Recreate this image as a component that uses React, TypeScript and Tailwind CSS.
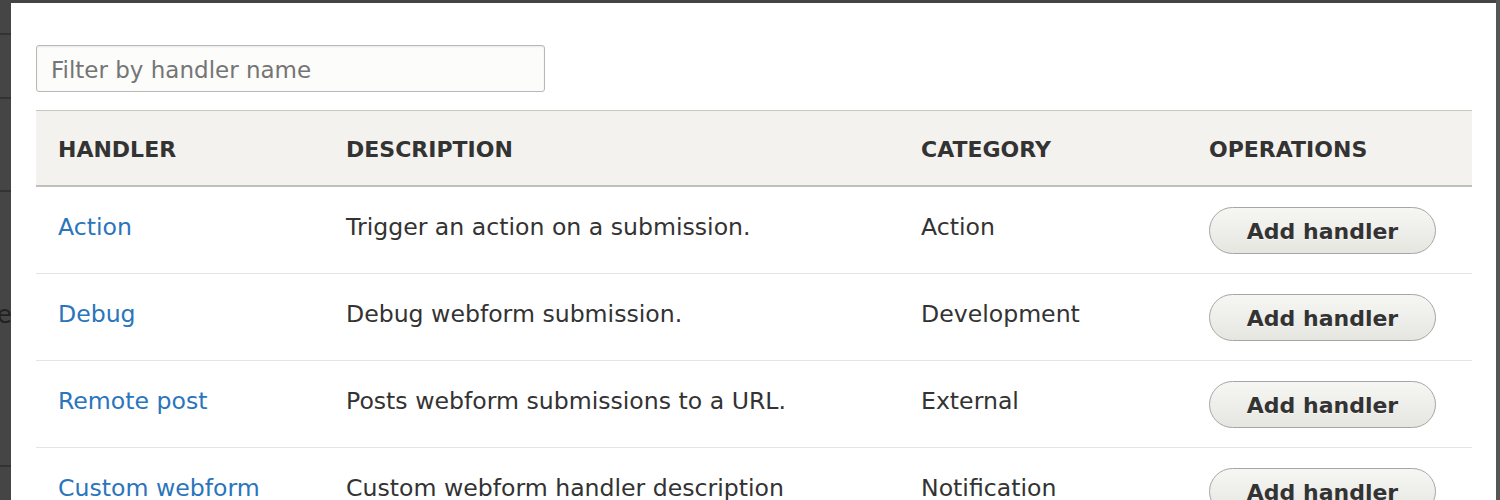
import React from "react";

const rows = [
  { name: "Action", desc: "Trigger an action on a submission.", cat: "Action" },
  { name: "Debug", desc: "Debug webform submission.", cat: "Development" },
  { name: "Remote post", desc: "Posts webform submissions to a URL.", cat: "External" },
  { name: "Custom webform", desc: "Custom webform handler description", cat: "Notification" },
];

function AddButton() {
  return (
    <button className="w-[227px] h-[47px] rounded-full border border-[#a6a6a6] bg-gradient-to-b from-[#f6f6f3] to-[#e6e6e1] text-[22px] font-bold text-[#333] leading-none pt-[2px] [text-shadow:0_1px_rgba(255,255,255,0.6)]">
      Add handler
    </button>
  );
}

export default function App() {
  return (
    <div
      className="w-[1500px] h-[500px] bg-[#444] flex overflow-hidden"
      style={{ fontFamily: '"DejaVu Sans", "Liberation Sans", sans-serif' }}
    >
      {/* left overlay strip */}
      <div className="w-[11px] shrink-0 flex flex-col bg-[#454545] relative">
        <div className="h-[33px]" />
        <div className="h-[2px] bg-[#333]" />
        <div className="h-[62px]" />
        <div className="h-[2px] bg-[#333]" />
        <div className="h-[91px]" />
        <div className="h-[2px] bg-[#333]" />
        <div className="h-[111px]" />
        <div className="text-[24px] leading-none text-[#222] -ml-[3px] overflow-hidden">e</div>
        <div className="h-[138px]" />
        <div className="h-[2px] bg-[#333]" />
      </div>

      {/* modal */}
      <div className="flex-1 mt-[3px] bg-white pl-[25px] pr-[24px]">
        <div className="pt-[42px]">
          <div className="w-[509px] h-[47px] rounded-[3px] border border-[#b8b8b8] bg-[#fcfcfa] shadow-[inset_0_1px_2px_rgba(0,0,0,0.08)] flex items-center pl-[14px] pt-[3px]">
            <span className="text-[23px] text-[#757575]">Filter by handler name</span>
          </div>
        </div>

        <div className="mt-[18px] border-t border-[#c8c7c0]">
          <div className="grid grid-cols-[288px_575px_288px_1fr] h-[76px] bg-[#f3f2ee] border-b-2 border-[#c0bfb9] items-center text-[22px] font-bold text-[#333] pt-[2px]">
            <div className="pl-[22px]">HANDLER</div>
            <div className="pl-[22px]">DESCRIPTION</div>
            <div className="pl-[22px]">CATEGORY</div>
            <div className="pl-[22px]">OPERATIONS</div>
          </div>
          {rows.map((r) => (
            <div
              key={r.name}
              className="grid grid-cols-[288px_575px_288px_1fr] h-[87px] border-b border-[#e6e4df] text-[23.6px] text-[#333]"
            >
              <div className="pl-[22px] pt-[24px] leading-[32px] text-[#2a75bb]">{r.name}</div>
              <div className="pl-[22px] pt-[24px] leading-[32px]">{r.desc}</div>
              <div className="pl-[22px] pt-[24px] leading-[32px]">{r.cat}</div>
              <div className="pl-[22px] pt-[20px]">
                <AddButton />
              </div>
            </div>
          ))}
        </div>
      </div>

      {/* right overlay strip */}
      <div className="w-[4px] shrink-0 bg-[#555]" />
    </div>
  );
}
